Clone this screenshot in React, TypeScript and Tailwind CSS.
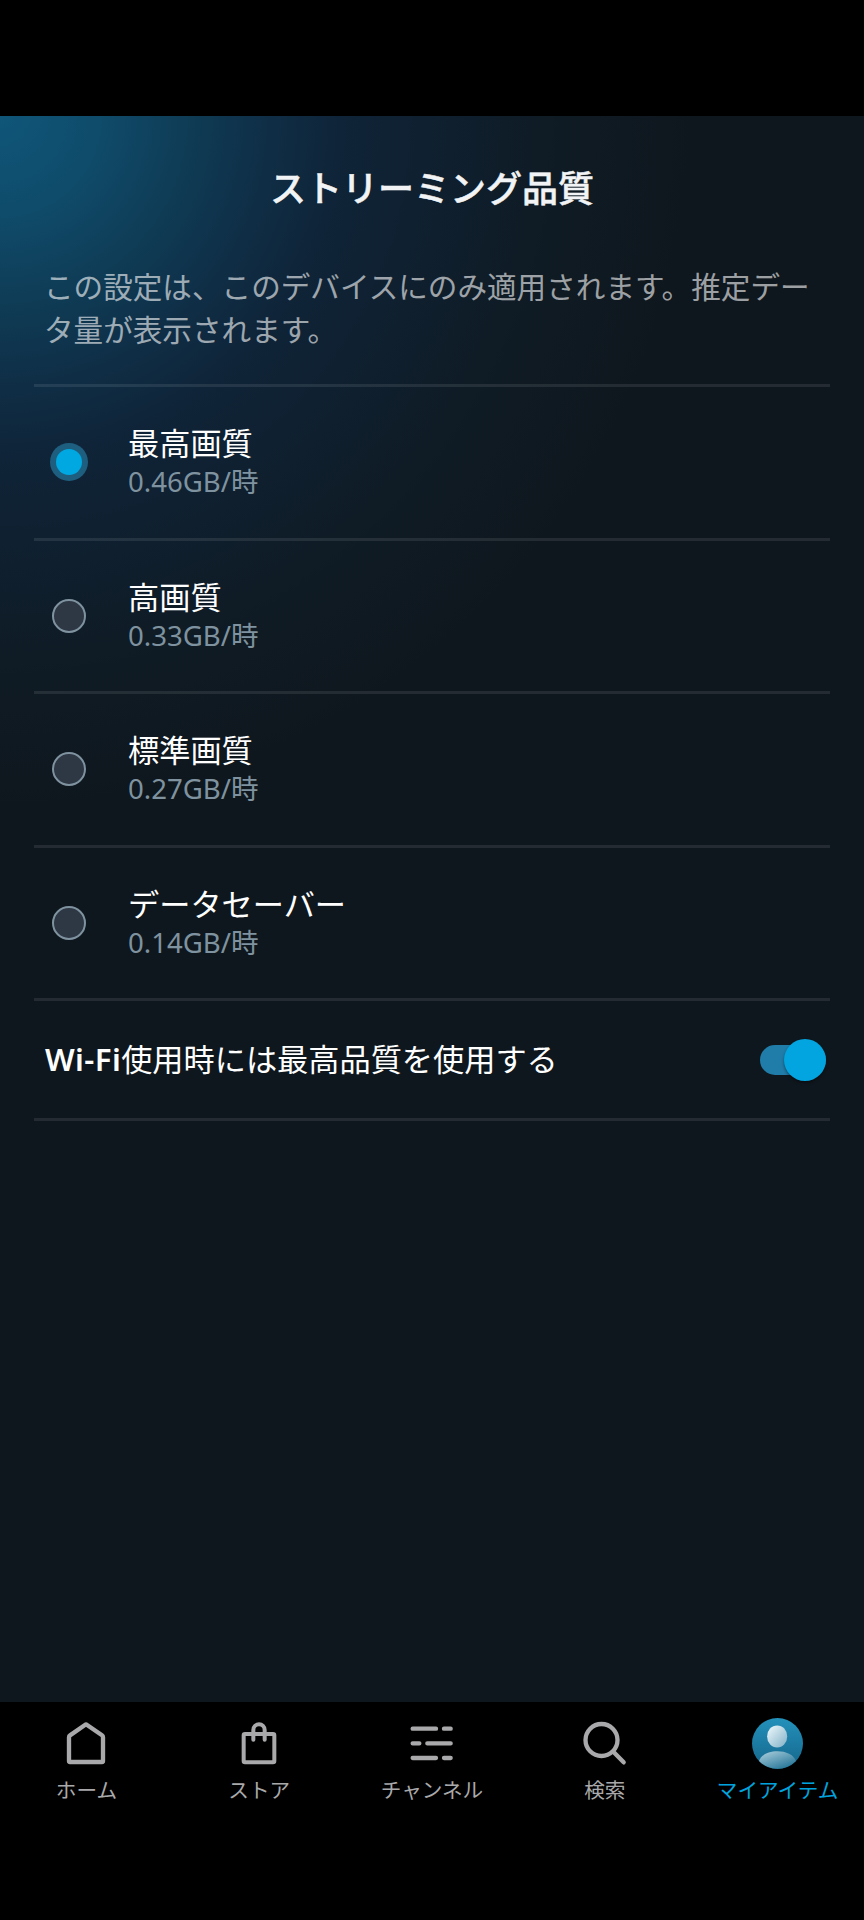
import React, { useState } from 'react';
import clsx from 'clsx';

interface QualityOption {
  id: string;
  label: string;
  usage: string;
}

const OPTIONS: QualityOption[] = [
  { id: 'best', label: '最高画質', usage: '0.46GB/時' },
  { id: 'better', label: '高画質', usage: '0.33GB/時' },
  { id: 'good', label: '標準画質', usage: '0.27GB/時' },
  { id: 'saver', label: 'データセーバー', usage: '0.14GB/時' },
];

const HomeIcon = () => (
  <svg viewBox="0 0 150 150" className="size-[50px]" fill="none" stroke="currentColor" strokeWidth="13" strokeLinejoin="round">
    <path d="M24 58 Q24 54 27 52 L75 19 L123 52 Q126 54 126 58 V129 Q126 132 123 132 H27 Q24 132 24 129 Z" />
  </svg>
);

const StoreIcon = () => (
  <svg viewBox="0 0 150 150" className="size-[50px]" fill="none" stroke="currentColor" strokeWidth="12" strokeLinejoin="round" strokeLinecap="round">
    <rect x="29" y="48" width="92" height="85" rx="4" />
    <path d="M58 65 V36 a17 17 0 0 1 34 0 V65" />
  </svg>
);

const ChannelsIcon = () => (
  <svg viewBox="0 0 150 150" className="size-[50px]" fill="none" stroke="currentColor" strokeWidth="13" strokeLinecap="round">
    <path d="M17 32 H87 M111 32 H131 M17 76 H37 M61 76 H131 M17 120 H87 M111 120 H131" />
  </svg>
);

const SearchIcon = () => (
  <svg viewBox="0 0 150 150" className="size-[50px]" fill="none" stroke="currentColor" strokeWidth="13" strokeLinecap="round">
    <circle cx="64.5" cy="66" r="48" />
    <path d="M100 101 L131 133" />
  </svg>
);

const ProfileIcon = () => (
  <svg viewBox="0 0 152 152" className="size-[51px]">
    <defs>
      <linearGradient id="disc" x1="0" y1="0" x2="0" y2="1">
        <stop offset="0" stopColor="#2391bb" />
        <stop offset="1" stopColor="#15658a" />
      </linearGradient>
      <linearGradient id="head" x1="0" y1="0" x2="1" y2="1">
        <stop offset="0.1" stopColor="#e6f3f8" />
        <stop offset="1" stopColor="#7fb0c6" />
      </linearGradient>
      <linearGradient id="body" x1="0.1" y1="0" x2="0.85" y2="1">
        <stop offset="0" stopColor="#a9cddc" />
        <stop offset="1" stopColor="#1d7093" />
      </linearGradient>
    </defs>
    <circle cx="76" cy="76" r="76" fill="url(#disc)" />
    <ellipse cx="75" cy="55" rx="30" ry="33" fill="url(#head)" />
    <path d="M21 128 C27 109 50 99 76 99 C101 99 124 109 131 128 A76 76 0 0 1 21 128 Z" fill="url(#body)" />
  </svg>
);

const NAV_ITEMS = [
  { label: 'ホーム', Icon: HomeIcon },
  { label: 'ストア', Icon: StoreIcon },
  { label: 'チャンネル', Icon: ChannelsIcon },
  { label: '検索', Icon: SearchIcon },
  { label: 'マイアイテム', Icon: ProfileIcon, active: true },
];

const Divider = () => <div className="h-[3px] shrink-0 bg-white/9" />;

const Radio = ({ checked }: { checked: boolean }) =>
  checked ? (
    <span className="flex size-[38px] items-center justify-center rounded-full bg-[#1e5f7f]">
      <span className="size-[26px] rounded-full bg-[#00a8e1]" />
    </span>
  ) : (
    <span className="size-[34px] rounded-full border-2 border-[#7f929f] bg-[#2e3744]" />
  );

export default function App() {
  const [selected, setSelected] = useState('best');
  const [wifiBest, setWifiBest] = useState(true);

  return (
    <div className="flex h-[1920px] w-[864px] flex-col bg-black pt-[116px] font-['Noto_Sans','Noto_Sans_CJK_JP',sans-serif]">
      <main className="flex h-[1586px] flex-col bg-[#0f171e] bg-[radial-gradient(circle_at_0_0,#0f5679_0px,#0f4b6a_100px,#0f3d57_180px,#0f2e46_270px,#0f2438_340px,#0f1f2e_450px,#0f1b24_560px,#0f171e_690px)]">
        <h1 className="mt-[46px] text-center text-[36px] leading-[54px] font-medium text-[#f1f3f5] [-webkit-text-stroke:0.5px_#f1f3f5]">
          ストリーミング品質
        </h1>
        <p className="mt-[49px] h-[119px] pr-[40px] pl-[44px] text-[29.6px] leading-[43.4px] text-white/60">
          この設定は、このデバイスにのみ適用されます。推定データ量が表示されます。
        </p>

        <div className="mr-[34px] ml-[34px] flex flex-col">
          <Divider />
          {OPTIONS.map((option) => (
            <React.Fragment key={option.id}>
              <button
                type="button"
                className="flex h-[150.6px] items-center text-left"
                onClick={() => setSelected(option.id)}
              >
                <span className="flex w-[70px] justify-center">
                  <Radio checked={selected === option.id} />
                </span>
                <span className="ml-[24px] flex flex-col">
                  <span className="text-[31.2px] leading-[40px] text-white">{option.label}</span>
                  <span className="-mt-px mb-px text-[27.6px] leading-[38px] text-[#7f929f]">{option.usage}</span>
                </span>
              </button>
              <Divider />
            </React.Fragment>
          ))}
          <button
            type="button"
            className="flex h-[117px] items-center justify-between pr-[4px] pl-[11px] text-left"
            onClick={() => setWifiBest(!wifiBest)}
          >
            <span className="-mt-[2px] text-[31.2px] leading-[44px] text-white">
              <span className="font-semibold tracking-[0.4px]">Wi-Fi</span>使用時には最高品質を使用する
            </span>
            <span
              className={clsx(
                'flex h-[30px] w-[66px] items-center rounded-full',
                wifiBest ? 'justify-end bg-[#207ca8]' : 'justify-start bg-[#2e3744]'
              )}
            >
              <span className="size-[42px] rounded-full bg-[#02a5df] shadow-[0_2px_3px_rgba(0,0,0,0.4)]" />
            </span>
          </button>
          <Divider />
        </div>
      </main>

      <nav className="grid grid-cols-5 pt-[16px]">
        {NAV_ITEMS.map(({ label, Icon, active }) => (
          <a
            key={label}
            className={clsx('flex flex-col items-center', active ? 'text-[#00a3dd]' : 'text-[#a9a9ab]')}
          >
            <span className="flex h-[51px] items-start">
              <Icon />
            </span>
            <span className="mt-[6px] text-[20.6px] leading-[30px] whitespace-nowrap">{label}</span>
          </a>
        ))}
      </nav>
    </div>
  );
}
